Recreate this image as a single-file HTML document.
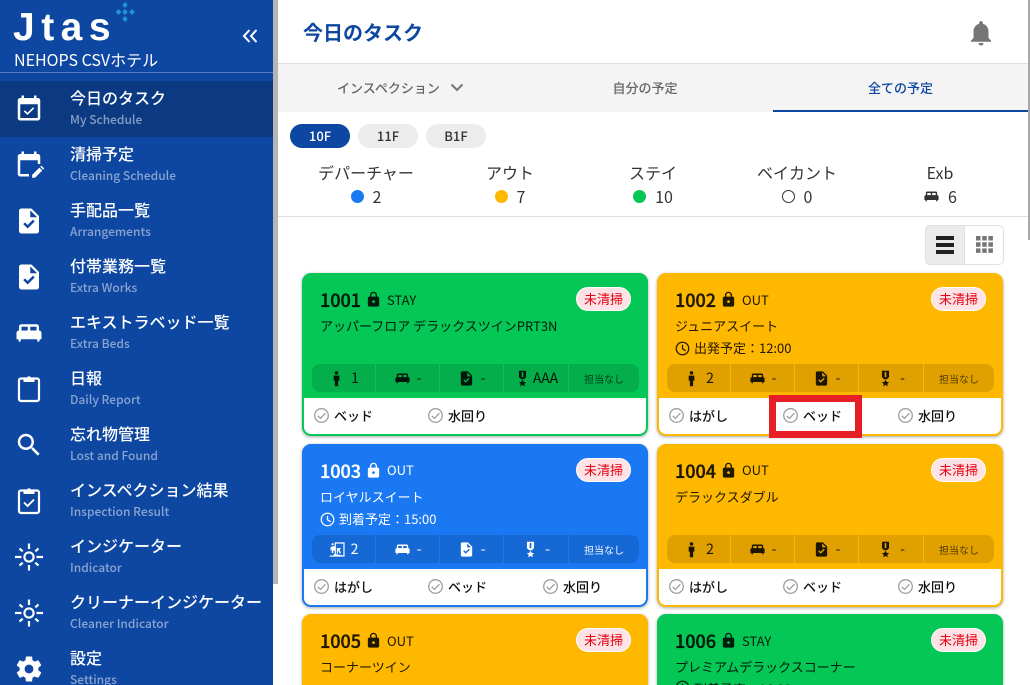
<!DOCTYPE html>
<html lang="ja"><head><meta charset="utf-8"><title>今日のタスク</title>
<style>
*{box-sizing:border-box}
html,body{margin:0;padding:0;width:1030px;height:685px;overflow:hidden;background:#fff}
#root{position:relative;width:1030px;height:685px;overflow:hidden;background:#fff;font-family:"Noto Sans CJK JP","Liberation Sans",sans-serif;color:#212121}
.a{position:absolute}
svg{display:block;fill:currentColor}
#side{left:0;top:0;width:273px;height:685px;background:#0e47a1;overflow:hidden;color:#fff}
.ic{position:absolute;left:14px;width:30px;height:30px;color:#fff}
.t{position:absolute;left:70px;font-size:16px;font-weight:500;line-height:22px;white-space:nowrap;color:#fff}
.s{position:absolute;left:70px;font-size:12px;font-weight:500;line-height:16px;white-space:nowrap;color:rgba(255,255,255,.5)}
.tab{position:absolute;top:64px;height:48px;line-height:48px;font-size:13px;font-weight:500;color:#666;text-align:center}
.chip{position:absolute;top:124px;width:60px;height:24px;border-radius:12px;background:#ececec;text-align:center;line-height:24px;font-size:13px;font-weight:500;color:#333}
.lb{position:absolute;top:161px;width:144px;text-align:center;font-size:16px;line-height:22px;color:#333}
.vl{position:absolute;top:185px;width:144px;height:22px;display:flex;align-items:center;justify-content:center;font-size:16px;color:#333}
.dot{display:inline-block;width:13px;height:13px;border-radius:50%;margin-right:9px}
.card{position:absolute;width:346px;height:163px;border-radius:9px;box-shadow:0 1px 3px rgba(0,0,0,.35);color:rgba(0,0,0,.87);overflow:hidden}
.last{height:71px;border-radius:9px 9px 0 0}
.g{background:#05c755;--k:#05c755}.o{background:#ffb800;--k:#ffb800}.b{background:#1a78f2;--k:#1a78f2;color:#fff}
.num{position:absolute;left:18px;top:14px;font-size:18px;font-weight:500;line-height:26px;-webkit-text-stroke:.35px currentColor}
.lk{position:absolute;left:63px;top:18px;width:17px;height:17px}
.st{position:absolute;left:85px;top:18px;font-size:13px;line-height:18px}
.r2 .st{top:17px}
.bd{position:absolute;left:274px;top:14px;width:55px;height:24px;border-radius:12px;background:#fde3e5;border:1px solid #fff;color:#e60012;font-size:13px;line-height:22px;text-align:center}
.nm{position:absolute;left:18px;top:44px;font-size:13px;line-height:18px;white-space:nowrap}
.tm{position:absolute;left:18px;top:66px;font-size:13px;line-height:18px;display:flex;align-items:center;white-space:nowrap}
.tm svg{width:15px;height:15px;margin-right:4px}
.bar{position:absolute;left:10px;top:91px;width:327px;height:28px;border-radius:8px;background:rgba(0,0,0,.12);overflow:hidden}
.c{position:absolute;top:0;height:28px;display:flex;align-items:center;justify-content:center;font-size:14px;white-space:nowrap}
.c svg{width:17px;height:17px;margin-right:6px}
.c1{left:0;width:63px}.c2{left:64px;width:63px}.c3{left:128px;width:63px}.c4{left:192px;width:64px}.c5{left:257px;width:70px;font-size:10px;opacity:.75}
.b .c5{opacity:.95}
.sep{position:absolute;top:0;width:1px;height:28px;background:var(--k)}
.ft{position:absolute;left:2px;top:125px;width:342px;height:36px;background:#fff;color:#111;border-radius:0 0 7px 7px}
.ck{position:absolute;top:10px;width:15px;height:15px;color:#9e9e9e;fill:none}
.fx{position:absolute;top:9px;font-size:13px;font-weight:500;line-height:18px;white-space:nowrap;color:#111}
</style></head><body>
<svg width="0" height="0" style="position:absolute"><defs>
<symbol id="cal" viewBox="0 0 24 24"><path d="M19 4h-1V2h-2v2H8V2H6v2H5C3.900 4 3 4.900 3 6v14c0 1.100.9 2 2 2h14c1.100 0 2-.9 2-2V6c0-1.100-.9-2-2-2zm0 16H5V9h14v11z"/><path d="M10.800 17.600l-3-2.900.9-.9 2.100 2 4.500-4.400.9.900z"/></symbol>
<symbol id="cale" viewBox="0 0 24 24"><path d="M19 4h-1V2h-2v2H8V2H6v2H5C3.900 4 3 4.900 3 6v14c0 1.100.9 2 2 2h7v-2H5V9h14v3h2V6c0-1.100-.9-2-2-2z"/><path d="M14.500 23v-2.300l5.800-5.800 2.300 2.300-5.800 5.800zM21 14.200l.9-.9 2.300 2.300-.9.9z"/></symbol>
<symbol id="task" viewBox="0 0 24 24"><path d="M14 2H6c-1.100 0-2 .9-2 2v16c0 1.100.9 2 2 2h12c1.100 0 2-.9 2-2V8l-6-6zm-3.060 16L7.400 14.460l1.410-1.410 2.120 2.120 4.240-4.240 1.410 1.410L10.940 18zM13 9V3.500L18.500 9H13z"/></symbol>
<symbol id="bed" viewBox="0 0 24 24"><path d="M20 10V7c0-1.100-.9-2-2-2H6c-1.100 0-2 .9-2 2v3c-1.100 0-2 .9-2 2v5h1.330L4 19h1l.67-2h12.670l.66 2h1l.67-2H22v-5c0-1.100-.9-2-2-2zm-9 0H6V7h5v3zm7 0h-5V7h5v3z"/></symbol>
<symbol id="clip" viewBox="0 0 30 30"><rect x="5" y="5.500" width="20" height="22.500" rx="2" fill="none" stroke="currentColor" stroke-width="2.200"/><path d="M9.500 5h3.700a1.800 1.800 0 0 1 3.600 0h3.700v4h-11z"/></symbol>
<symbol id="insp" viewBox="0 0 30 30"><rect x="5" y="5.500" width="20" height="22.500" rx="2" fill="none" stroke="currentColor" stroke-width="2.200"/><path d="M9.500 5h3.700a1.800 1.800 0 0 1 3.600 0h3.700v4h-11z"/><path d="M10 17.500l3.600 3.500 6.400-6.500" fill="none" stroke="currentColor" stroke-width="1.900"/></symbol>
<symbol id="srch" viewBox="0 0 24 24"><path d="M15.500 14h-.79l-.28-.27C15.410 12.590 16 11.110 16 9.500 16 5.910 13.090 3 9.500 3S3 5.910 3 9.500 5.910 16 9.500 16c1.610 0 3.090-.59 4.230-1.570l.27.28v.79l5 4.990L20.490 19l-4.990-5zm-6 0C7.010 14 5 11.990 5 9.500S7.010 5 9.500 5 14 7.010 14 9.500 11.990 14 9.500 14z"/></symbol>
<symbol id="sun" viewBox="0 0 30 30"><circle cx="15" cy="15" r="4.600" fill="none" stroke="currentColor" stroke-width="2.100"/><path d="M15 1.500v5.500M15 23v5.500M1 15h6.500M22.500 15H29M5.500 6.500l3.200 2.800M21.300 20.700l3.200 2.800M24.500 6.500l-3.200 2.800M8.700 20.700l-3.200 2.800" fill="none" stroke="currentColor" stroke-width="2.200"/></symbol>
<symbol id="gear" viewBox="0 0 24 24"><path d="M19.430 12.980c.04-.32.070-.64.070-.98s-.03-.66-.07-.98l2.110-1.650c.19-.15.240-.42.120-.64l-2-3.460c-.12-.22-.39-.3-.61-.22l-2.490 1c-.52-.4-1.080-.73-1.690-.98l-.38-2.650C14.460 2.180 14.250 2 14 2h-4c-.25 0-.46.18-.49.420l-.38 2.650c-.61.25-1.170.59-1.690.98l-2.490-1c-.23-.09-.49 0-.61.22l-2 3.460c-.13.22-.07.49.12.64l2.110 1.650c-.04.32-.07.65-.07.98s.03.66.07.98l-2.110 1.650c-.19.150-.24.420-.12.640l2 3.460c.12.220.39.300.61.220l2.490-1c.52.400 1.080.730 1.690.980l.38 2.650c.03.240.24.420.49.420h4c.25 0 .46-.18.49-.42l.38-2.650c.61-.25 1.170-.59 1.690-.98l2.490 1c.23.090.49 0 .61-.22l2-3.460c.12-.22.070-.49-.12-.64l-2.110-1.650zM12 15.500c-1.930 0-3.500-1.570-3.500-3.500s1.570-3.500 3.500-3.500 3.500 1.570 3.500 3.500-1.570 3.500-3.500 3.500z"/></symbol>
<symbol id="lock" viewBox="0 0 24 24"><path d="M18 8h-1V6c0-2.760-2.240-5-5-5S7 3.240 7 6v2H6c-1.100 0-2 .9-2 2v10c0 1.100.9 2 2 2h12c1.100 0 2-.9 2-2V10c0-1.100-.9-2-2-2zm-6 9c-1.100 0-2-.9-2-2s.9-2 2-2 2 .9 2 2-.9 2-2 2zm3.100-9H8.900V6c0-1.710 1.390-3.100 3.100-3.100 1.710 0 3.100 1.390 3.100 3.100v2z"/></symbol>
<symbol id="man" viewBox="0 0 24 24"><circle cx="12" cy="4" r="2.500"/><path d="M8 8h8v7h-1.700v8h-4.600v-8H8z"/></symbol>
<symbol id="med" viewBox="0 0 24 24"><path d="M7 1h10v9l-3 3h-4l-3-3zM10.800 3v7h2.400V3z"/><path d="M12 13.500l1.600 3.200 3.500.4-2.600 2.400.7 3.500-3.200-1.800-3.200 1.800.7-3.500-2.600-2.400 3.500-.4z"/></symbol>
<symbol id="exit" viewBox="0 0 24 24"><path d="M8 2h14v20H1v-1.500h5.500v-2H8zM20.300 20.500V3.700H9.700v14.800zM2 9l4-2 2 1v6l-2-1v4H4v-4l-1.500 1zM11 10h6l-2 2.500 2 5h-2l-1.500-3.500-1 1V18h-1.500v-6z"/><circle cx="5" cy="4.500" r="1.500"/></symbol>
<symbol id="clock" viewBox="0 0 24 24"><circle cx="12" cy="12" r="10" fill="none" stroke="currentColor" stroke-width="2"/><path d="M12 6v6.500l5 3" fill="none" stroke="currentColor" stroke-width="2"/></symbol>
<symbol id="ck" viewBox="0 0 15 15"><circle cx="7.500" cy="7.500" r="6.800" fill="none" stroke="currentColor" stroke-width="1.300"/><path d="M3.800 7.800l2.600 2.600 5-5.200" fill="none" stroke="currentColor" stroke-width="1.300"/></symbol>
</defs></svg>
<div id="root">
<div id="side" class="a">
<div class="a" style="left:13px;top:5px;font:700 39px/46px 'Liberation Sans',sans-serif;letter-spacing:6.500px;white-space:nowrap">Jtas</div>
<svg class="a" style="left:115px;top:1px;width:21px;height:24px;color:#1e96d0" viewBox="0 0 21 24"><path d="M10 1l2.800 3-2.800 3-2.800-3zM10 8l2.800 3-2.800 3-2.800-3zM10 15l2.800 3-2.800 3-2.800-3zM3.500 8l2.800 3-2.800 3L.7 11zM17 8l2.800 3-2.800 3-2.800-3z"/></svg>
<div class="a" style="left:14px;top:47px;font-size:16px;line-height:24px;white-space:nowrap">NEHOPS CSVホテル</div>
<svg class="a" style="left:242px;top:29px;width:16px;height:14px;color:#fff;fill:none" viewBox="0 0 16 14"><path d="M7.500 1L2 7l5.500 6M14.500 1L9 7l5.500 6" stroke="currentColor" stroke-width="2" fill="none"/></svg>
<div class="a" style="left:0;top:72px;width:273px;height:1px;background:rgba(255,255,255,.3)"></div>
<div class="a" style="left:0;top:81px;width:273px;height:56px;background:#0b3a82"></div>
<svg class="ic" style="top:93px"><use href="#cal"/></svg><div class="t" style="top:86px">今日のタスク</div><div class="s" style="top:112px">My Schedule</div>
<svg class="ic" style="top:149px"><use href="#cale"/></svg><div class="t" style="top:142px">清掃予定</div><div class="s" style="top:168px">Cleaning Schedule</div>
<svg class="ic" style="top:206px"><use href="#task"/></svg><div class="t" style="top:198px">手配品一覧</div><div class="s" style="top:224px">Arrangements</div>
<svg class="ic" style="top:262px"><use href="#task"/></svg><div class="t" style="top:254px">付帯業務一覧</div><div class="s" style="top:280px">Extra Works</div>
<svg class="ic" style="top:318px"><use href="#bed"/></svg><div class="t" style="top:310px">エキストラベッド一覧</div><div class="s" style="top:336px">Extra Beds</div>
<svg class="ic" style="top:373px"><use href="#clip"/></svg><div class="t" style="top:366px">日報</div><div class="s" style="top:392px">Daily Report</div>
<svg class="ic" style="top:430px"><use href="#srch"/></svg><div class="t" style="top:422px">忘れ物管理</div><div class="s" style="top:448px">Lost and Found</div>
<svg class="ic" style="top:485px"><use href="#insp"/></svg><div class="t" style="top:478px">インスペクション結果</div><div class="s" style="top:504px">Inspection Result</div>
<svg class="ic" style="top:542px"><use href="#sun"/></svg><div class="t" style="top:534px">インジケーター</div><div class="s" style="top:560px">Indicator</div>
<svg class="ic" style="top:598px"><use href="#sun"/></svg><div class="t" style="top:590px">クリーナーインジケーター</div><div class="s" style="top:616px">Cleaner Indicator</div>
<svg class="ic" style="top:654px"><use href="#gear"/></svg><div class="t" style="top:646px">設定</div><div class="s" style="top:672px;height:13px;overflow:hidden">Settings</div>
</div>
<div class="a" style="left:273px;top:0;width:5px;height:584px;background:#b5b5b5"></div>
<div class="a" style="left:1028px;top:0;width:2px;height:240px;background:#a8a8a8"></div>

<div class="a" style="left:303px;top:18px;font-size:20px;font-weight:700;line-height:28px;color:#0e47a1;white-space:nowrap">今日のタスク</div>
<svg class="a" style="left:966px;top:18px;width:30px;height:30px;color:#757575" viewBox="0 0 24 24"><path d="M12 22c1.100 0 2-.9 2-2h-4c0 1.100.9 2 2 2zm6-6v-5c0-3.070-1.630-5.640-4.500-6.320V4c0-.83-.67-1.500-1.500-1.500s-1.500.67-1.500 1.500v.68C7.640 5.360 6 7.920 6 11v5l-2 2v1h16v-1l-2-2z"/></svg>
<div class="a" style="left:278px;top:63px;width:750px;height:1px;background:#dedede"></div>
<div class="a" style="left:278px;top:64px;width:750px;height:48px;background:#f4f4f4"></div>
<div class="tab" style="left:337px;white-space:nowrap">インスペクション</div>
<svg class="a" style="left:450px;top:83px;width:14px;height:9px;color:#757575;fill:none" viewBox="0 0 14 9"><path d="M1.500 1.500L7 7l5.500-5.500" stroke="currentColor" stroke-width="2" fill="none"/></svg>
<div class="tab" style="left:525px;width:240px">自分の予定</div>
<div class="tab" style="left:773px;width:255px;color:#0e47a1">全ての予定</div>
<div class="a" style="left:773px;top:110px;width:255px;height:2px;background:#0e47a1"></div>
<div class="chip" style="left:290px;background:#0e47a1;color:#fff">10F</div>
<div class="chip" style="left:358px">11F</div>
<div class="chip" style="left:426px">B1F</div>
<div class="lb" style="left:294px">デパーチャー</div>
<div class="lb" style="left:438px">アウト</div>
<div class="lb" style="left:581px">ステイ</div>
<div class="lb" style="left:725px">ベイカント</div>
<div class="lb" style="left:868px">Exb</div>
<div class="vl" style="left:294px"><span class="dot" style="background:#1a78f2"></span>2</div>
<div class="vl" style="left:438px"><span class="dot" style="background:#ffb800"></span>7</div>
<div class="vl" style="left:581px"><span class="dot" style="background:#05c755"></span>10</div>
<div class="vl" style="left:725px"><span class="dot" style="border:1.500px solid #333"></span>0</div>
<div class="vl" style="left:868px"><svg style="width:17px;height:17px;margin-right:8px"><use href="#bed"/></svg>6</div>
<div class="a" style="left:278px;top:216px;width:750px;height:1px;background:#e0e0e0"></div>
<div class="a" style="left:925px;top:225px;width:79px;height:40px;border:1px solid #e0e0e0;border-radius:5px"></div>
<div class="a" style="left:925px;top:225px;width:40px;height:40px;background:#ebebeb;border:1px solid #e0e0e0;border-radius:5px 0 0 5px"></div>
<div class="a" style="left:936px;top:236px;width:18px;height:4px;background:#212121"></div>
<div class="a" style="left:936px;top:243px;width:18px;height:4px;background:#212121"></div>
<div class="a" style="left:936px;top:250px;width:18px;height:4px;background:#212121"></div>
<svg class="a" style="left:976px;top:236px;width:17px;height:17px;color:#757575" viewBox="0 0 17 17"><path d="M0 0h4.500v4.500H0zM6.200 0h4.500v4.500H6.200zM12.400 0h4.500v4.500h-4.500zM0 6.200h4.500v4.500H0zM6.200 6.200h4.500v4.500H6.200zM12.400 6.200h4.500v4.500h-4.500zM0 12.400h4.500v4.500H0zM6.200 12.400h4.500v4.500H6.200zM12.400 12.400h4.500v4.500h-4.500z"/></svg>

<div class="card g" style="left:302px;top:273px">
<div class="num">1001</div><svg class="lk"><use href="#lock"/></svg><div class="st">STAY</div><div class="bd">未清掃</div>
<div class="nm">アッパーフロア デラックスツインPRT3N</div>
<div class="bar"><span class="sep" style="left:63px"></span><span class="sep" style="left:127px"></span><span class="sep" style="left:191px"></span><span class="sep" style="left:256px"></span>
<div class="c c1"><svg><use href="#man"/></svg>1</div><div class="c c2"><svg><use href="#bed"/></svg>-</div><div class="c c3"><svg><use href="#task"/></svg>-</div><div class="c c4"><svg style="margin-right:2px"><use href="#med"/></svg>AAA</div><div class="c c5">担当なし</div></div>
<div class="ft"><svg class="ck" style="left:10px"><use href="#ck"/></svg><div class="fx" style="left:30px">ベッド</div><svg class="ck" style="left:124px"><use href="#ck"/></svg><div class="fx" style="left:144px">水回り</div></div>
</div>

<div class="card o" style="left:657px;top:273px">
<div class="num">1002</div><svg class="lk"><use href="#lock"/></svg><div class="st">OUT</div><div class="bd">未清掃</div>
<div class="nm">ジュニアスイート</div>
<div class="tm"><svg><use href="#clock"/></svg>出発予定：12:00</div>
<div class="bar"><span class="sep" style="left:63px"></span><span class="sep" style="left:127px"></span><span class="sep" style="left:191px"></span><span class="sep" style="left:256px"></span>
<div class="c c1"><svg><use href="#man"/></svg>2</div><div class="c c2"><svg><use href="#bed"/></svg>-</div><div class="c c3"><svg><use href="#task"/></svg>-</div><div class="c c4"><svg><use href="#med"/></svg>-</div><div class="c c5">担当なし</div></div>
<div class="ft"><svg class="ck" style="left:10px"><use href="#ck"/></svg><div class="fx" style="left:30px">はがし</div><svg class="ck" style="left:124px"><use href="#ck"/></svg><div class="fx" style="left:144px">ベッド</div><svg class="ck" style="left:239px"><use href="#ck"/></svg><div class="fx" style="left:259px">水回り</div></div>
</div>

<div class="a" style="left:769px;top:395px;width:93px;height:43px;border:7px solid #e61e25"></div>

<div class="card b r2" style="left:302px;top:444px">
<div class="num">1003</div><svg class="lk"><use href="#lock"/></svg><div class="st">OUT</div><div class="bd">未清掃</div>
<div class="nm">ロイヤルスイート</div>
<div class="tm"><svg><use href="#clock"/></svg>到着予定：15:00</div>
<div class="bar"><span class="sep" style="left:63px"></span><span class="sep" style="left:127px"></span><span class="sep" style="left:191px"></span><span class="sep" style="left:256px"></span>
<div class="c c1"><svg style="margin-right:5px"><use href="#exit"/></svg>2</div><div class="c c2"><svg><use href="#bed"/></svg>-</div><div class="c c3"><svg><use href="#task"/></svg>-</div><div class="c c4"><svg><use href="#med"/></svg>-</div><div class="c c5">担当なし</div></div>
<div class="ft"><svg class="ck" style="left:10px"><use href="#ck"/></svg><div class="fx" style="left:30px">はがし</div><svg class="ck" style="left:124px"><use href="#ck"/></svg><div class="fx" style="left:144px">ベッド</div><svg class="ck" style="left:239px"><use href="#ck"/></svg><div class="fx" style="left:259px">水回り</div></div>
</div>

<div class="card o r2" style="left:657px;top:444px">
<div class="num">1004</div><svg class="lk"><use href="#lock"/></svg><div class="st">OUT</div><div class="bd">未清掃</div>
<div class="nm">デラックスダブル</div>
<div class="bar"><span class="sep" style="left:63px"></span><span class="sep" style="left:127px"></span><span class="sep" style="left:191px"></span><span class="sep" style="left:256px"></span>
<div class="c c1"><svg><use href="#man"/></svg>2</div><div class="c c2"><svg><use href="#bed"/></svg>-</div><div class="c c3"><svg><use href="#task"/></svg>-</div><div class="c c4"><svg><use href="#med"/></svg>-</div><div class="c c5">担当なし</div></div>
<div class="ft"><svg class="ck" style="left:10px"><use href="#ck"/></svg><div class="fx" style="left:30px">はがし</div><svg class="ck" style="left:124px"><use href="#ck"/></svg><div class="fx" style="left:144px">ベッド</div><svg class="ck" style="left:239px"><use href="#ck"/></svg><div class="fx" style="left:259px">水回り</div></div>
</div>

<div class="card o last" style="left:302px;top:614px">
<div class="num">1005</div><svg class="lk"><use href="#lock"/></svg><div class="st">OUT</div><div class="bd">未清掃</div>
<div class="nm">コーナーツイン</div>
</div>

<div class="card g last" style="left:657px;top:614px">
<div class="num">1006</div><svg class="lk"><use href="#lock"/></svg><div class="st">STAY</div><div class="bd">未清掃</div>
<div class="nm">プレミアムデラックスコーナー</div>
<div class="tm" style="height:5px;overflow:hidden;align-items:flex-start"><svg style="flex:none"><use href="#clock"/></svg>到着予定：16:00</div>
</div>
</div>
</body></html>
